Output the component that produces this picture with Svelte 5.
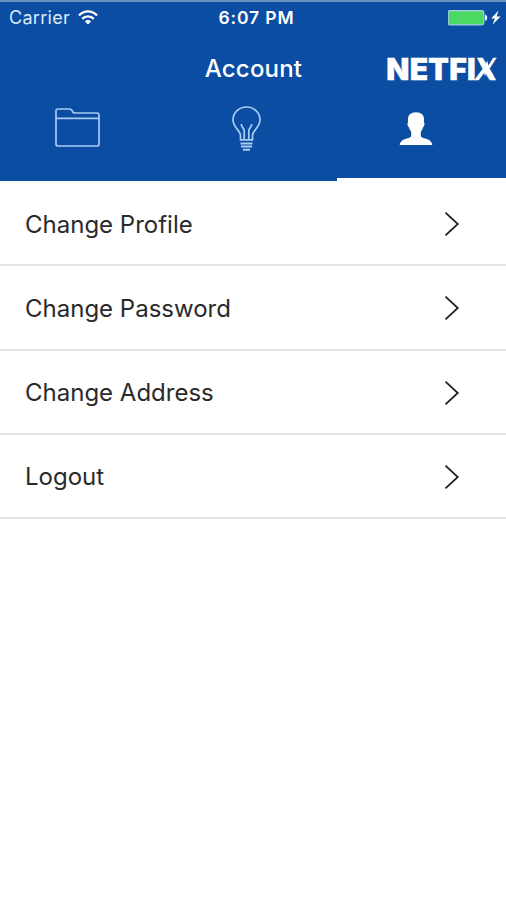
<script lang="ts">
  interface Item {
    id: string;
    label: string;
  }

  const items: Item[] = [
    { id: 'profile', label: 'Change Profile' },
    { id: 'password', label: 'Change Password' },
    { id: 'address', label: 'Change Address' },
    { id: 'logout', label: 'Logout' }
  ];

  let activeTab = $state('account');
</script>

<div class="screen">
  <header>
    <div class="status-bar">
      <div class="carrier">
        <span>Carrier</span>
        <svg class="wifi" width="20" height="15" viewBox="0 0 20 15" fill="none" stroke="#fff" stroke-width="2.3">
          <path d="M1 5.4C6-.1 14-.1 19 5.4" />
          <path d="M4.2 8.9c3.3-3.5 8.3-3.5 11.6 0" />
          <path d="M6.9 11.4c1.7-1.8 4.5-1.8 6.2 0L10 14.5z" fill="#fff" stroke="none" />
        </svg>
      </div>
      <span class="time">6:07 PM</span>
      <div class="power">
        <svg width="54" height="18" viewBox="0 0 54 18">
          <rect x=".2" y="1.6" width="35.6" height="14.2" rx="1.8" fill="#4bd964" stroke="#a9cbea" stroke-width="1.2" />
          <path d="M37 5.4c2.9.6 2.9 5.9 0 6.5z" fill="#fff" />
          <path d="M50.5 1.6L43.2 9.4h3.7L44.6 15.6l8-8.2h-4z" fill="#fff" />
        </svg>
      </div>
    </div>

    <div class="title-bar">
      <h1>Account</h1>
      <div class="brand">NETFI<span class="brand-x">X</span></div>
    </div>

    <nav class="tabs">
      <button class="tab" class:active={activeTab === 'files'} aria-label="Files" onclick={() => (activeTab = 'files')}>
        <svg width="48" height="42" viewBox="0 0 48 42" fill="none" stroke="#a9ccf5" stroke-width="1.7" stroke-linejoin="round">
          <path d="M2 36.8V4Q2 2 4 2h11.5q1.5 0 2.3 1.3L19.5 6H43q2 0 2 2v29q0 2-2 2H4q-2 0-2-2zM2 11.4h43" />
        </svg>
      </button>
      <button class="tab" class:active={activeTab === 'ideas'} aria-label="Ideas" onclick={() => (activeTab = 'ideas')}>
        <svg width="32" height="48" viewBox="0 0 32 48" fill="none" stroke="#a9ccf5" stroke-width="1.7">
          <path d="M9.5 34.8v-4.2C9.5 25.5 2 22.5 2 14.8 2 7.3 8.3 2 15.5 2S29 7.3 29 14.8c0 7.7-7.5 10.7-7.5 15.800v4.200z" />
          <path d="M13.200 34.800V25.500c0-2.500-3-3-3-6.500M17.800 34.800V25.500c0-2.500 3-3 3-6.500" />
          <path d="M9.500 38.500h12M10 41.600h11M12 44.700h7" stroke-width="2" />
        </svg>
      </button>
      <button class="tab" class:active={activeTab === 'account'} aria-label="Account" onclick={() => (activeTab = 'account')}>
        <svg width="34" height="36" viewBox="0 0 34 36" fill="#fff">
          <path d="M17 1.200c5.200 0 8.200 3 8.100 7.400l-.2 3c1.100.5.6 3.800-.8 4.500-.5 2-1.200 3.400-2.300 4.700v4c0 1 1 1.600 2.500 2.100 5 1.200 8.400 2.500 9 7.100H.7c.6-4.600 4-5.900 9-7.100 1.500-.5 2.500-1.100 2.500-2.100v-4c-1.100-1.300-1.800-2.700-2.300-4.700-1.400-.7-1.900-4-.8-4.500l-.2-3C8.800 4.200 11.800 1.200 17 1.200z" />
        </svg>
      </button>
    </nav>
  </header>

  <ul class="menu">
    {#each items as item (item.id)}
      <li class="row">
        <span>{item.label}</span>
        <svg width="16" height="26" viewBox="0 0 16 26" fill="none" stroke="#222" stroke-width="1.8">
          <path d="M1.5 1.6L13.8 13 1.5 24.4" />
        </svg>
      </li>
    {/each}
  </ul>
</div>

<style>
  :global(body) {
    margin: 0;
    background: #fff;
  }

  .screen {
    width: 506px;
    height: 900px;
    overflow: hidden;
    background: #fff;
    font-family: Inter, 'Liberation Sans', sans-serif;
  }

  header {
    display: flex;
    flex-direction: column;
    box-sizing: border-box;
    height: 181px;
    background: #0b4da2;
    border-top: 2px solid #6d8fbe;
    color: #fff;
  }

  .status-bar {
    display: grid;
    grid-template-columns: 1fr auto 1fr;
    align-items: center;
    height: 31px;
    padding: 0 4px 0 9px;
    font-size: 18px;
  }

  .carrier {
    display: flex;
    align-items: center;
    gap: 8px;
    color: #dbe9fa;
    letter-spacing: 0.3px;
  }

  .time {
    font-size: 17.5px;
    font-weight: 600;
    letter-spacing: 0.9px;
    padding-left: 2px;
  }

  .power {
    display: flex;
    justify-content: flex-end;
  }

  .title-bar {
    display: grid;
    grid-template-columns: 1fr auto 1fr;
    align-items: center;
    height: 70px;
    padding: 0 9px 0 10px;
  }

  h1 {
    grid-column: 2;
    margin: 0;
    font-size: 24px;
    font-weight: 500;
    letter-spacing: 0.2px;
  }

  .brand {
    justify-self: end;
    padding-top: 2px;
    font-size: 30px;
    line-height: 34px;
    font-weight: 900;
    letter-spacing: 0.3px;
    -webkit-text-stroke: 0.4px #fff;
  }

  /* one heavy arm and one thin arm, cut from the bold letter */
  .brand-x {
    display: inline-block;
    margin: 0 -1px 0 -2px;
    clip-path: polygon(
      0 0,
      46% 0,
      60% 40%,
      84% 12%,
      100% 12%,
      100% 18%,
      68% 51%,
      105% 100%,
      55% 100%,
      42% 62%,
      16% 86%,
      -4% 86%,
      -4% 82%,
      35% 50%
    );
  }

  .tabs {
    display: flex;
    flex: 1;
  }

  .tab {
    display: flex;
    flex: 1;
    justify-content: center;
    align-items: flex-start;
    padding: 4px 12px 0 0;
    border: none;
    border-bottom: 3px solid transparent;
    background: none;
  }

  .tab:nth-child(2) {
    padding-top: 2px;
  }

  .tab.active {
    padding-top: 8px;
    border-bottom-color: #fff;
  }

  .menu {
    margin: 0;
    padding: 1px 0 0;
    list-style: none;
  }

  .row {
    display: flex;
    align-items: center;
    justify-content: space-between;
    box-sizing: border-box;
    height: 84.25px;
    padding: 2px 46px 0 25px;
    border-bottom: 2px solid #e4e4e4;
    color: #2a2a2a;
    font-size: 24px;
  }
</style>
